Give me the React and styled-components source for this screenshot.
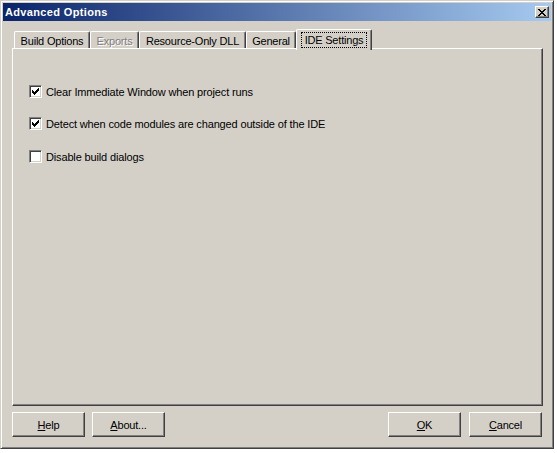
import React from "react";
import styled, { createGlobalStyle } from "styled-components";

const Global = createGlobalStyle`
  html, body { margin: 0; padding: 0; background: #ffffff; }
  body { font-family: "Liberation Sans", Arial, sans-serif; font-size: 11px; }
  * { box-sizing: border-box; }
`;

const Window = styled.div`
  width: 554px;
  height: 449px;
  background: #d4d0c8;
  border: 1px solid;
  border-color: #d4d0c8 #404040 #404040 #d4d0c8;
  box-shadow: inset 1px 1px #ffffff, inset -1px -1px #808080;
  padding: 2px;
  display: flex;
  flex-direction: column;
`;

const TitleBar = styled.div`
  height: 18px;
  flex: none;
  background: linear-gradient(to right, #0a246a, #a6caf0);
  display: flex;
  align-items: center;
  justify-content: space-between;
  padding: 0 2px 0 2px;
`;

const TitleText = styled.span`
  color: #ffffff;
  font-weight: bold;
  font-size: 11px;
  letter-spacing: 0.35px;
  line-height: 18px;
`;

const CloseButton = styled.div`
  width: 14px;
  height: 12px;
  background: #d4d0c8;
  border: 1px solid;
  border-color: #ffffff #404040 #404040 #ffffff;
  box-shadow: inset -1px -1px #808080;
  display: flex;
  align-items: center;
  justify-content: center;
`;

const Body = styled.div`
  flex: 1;
  display: flex;
  flex-direction: column;
  padding: 8px 8px 9px 9px;
`;

const TabStrip = styled.div`
  height: 19px;
  flex: none;
  display: flex;
  align-items: flex-end;
  padding-left: 2px;
  position: relative;
  z-index: 1;
`;

const Tab = styled.div`
  width: ${(p) => p.$w}px;
  height: ${(p) => (p.$active ? 21 : 17)}px;
  margin-bottom: ${(p) => (p.$active ? -2 : 0)}px;
  background: #d4d0c8;
  border-top: 1px solid #ffffff;
  border-left: 1px solid #ffffff;
  border-right: 1px solid #404040;
  border-top-left-radius: 2px;
  border-top-right-radius: 2px;
  box-shadow: inset -1px 0 #808080;
  display: flex;
  justify-content: center;
  align-items: flex-start;
  padding-top: ${(p) => (p.$active ? 2 : 3)}px;
  color: ${(p) => (p.$disabled ? "#808080" : "#000000")};
  text-shadow: ${(p) => (p.$disabled ? "1px 1px 0 #ffffff" : "none")};
  letter-spacing: -0.2px;
  line-height: 13px;
  white-space: nowrap;
`;

const FocusRect = styled.span`
  border: 1px dotted #000000;
  padding: 0 3px;
  line-height: 13px;
  height: 16px;
  display: flex;
  align-items: center;
`;

const Panel = styled.div`
  flex: 1;
  border: 1px solid;
  border-color: #ffffff #404040 #404040 #ffffff;
  box-shadow: inset -1px -1px #808080;
  display: flex;
  flex-direction: column;
  padding: 36px 0 0 16px;
`;

const OptionRow = styled.label`
  display: flex;
  align-items: center;
  height: 13px;
  gap: 4px;
  margin-bottom: ${(p) => p.$gap}px;
  letter-spacing: -0.15px;
  color: #000000;
  white-space: nowrap;
`;

const CheckBox = styled.span`
  width: 13px;
  height: 13px;
  flex: none;
  background: #ffffff;
  border: 1px solid;
  border-color: #808080 #ffffff #ffffff #808080;
  box-shadow: inset 1px 1px #404040, inset -1px -1px #d4d0c8;
  display: flex;
  align-items: center;
  justify-content: center;
`;

const ButtonRow = styled.div`
  flex: none;
  margin-top: 6px;
  display: flex;
  justify-content: space-between;
  padding-right: 1px;
`;

const ButtonGroup = styled.div`
  display: flex;
  gap: ${(p) => p.$gap}px;
`;

const Button = styled.div`
  width: 73px;
  height: 25px;
  background: #d4d0c8;
  border: 1px solid;
  border-color: #ffffff #404040 #404040 #ffffff;
  box-shadow: inset -1px -1px #808080;
  display: flex;
  align-items: center;
  justify-content: center;
  letter-spacing: -0.2px;
  color: #000000;
  u { text-decoration: underline; text-underline-offset: 1px; }
`;

const Pixels = ({ rows, w, h }) => (
  <svg width={w} height={h} viewBox={`0 0 ${w} ${h}`} shapeRendering="crispEdges">
    {rows.map((r, y) =>
      r.split("").map((c, x) =>
        c === "x" ? <rect key={`${x}-${y}`} x={x} y={y} width="1" height="1" fill="#000" /> : null
      )
    )}
  </svg>
);

const checkRows = [
  "......x",
  ".....xx",
  "x...xxx",
  "xx.xxx.",
  "xxxxx..",
  ".xxx...",
  "..x....",
];

const closeRows = [
  "xx....xx",
  ".xx..xx.",
  "..xxxx..",
  "...xx...",
  "..xxxx..",
  ".xx..xx.",
  "xx....xx",
];

const Option = ({ checked, children, gap }) => (
  <OptionRow $gap={gap}>
    <CheckBox>{checked && <Pixels rows={checkRows} w={7} h={7} />}</CheckBox>
    <span>{children}</span>
  </OptionRow>
);

export default function App() {
  return (
    <>
      <Global />
      <Window>
        <TitleBar>
          <TitleText>Advanced Options</TitleText>
          <CloseButton>
            <Pixels rows={closeRows} w={8} h={7} />
          </CloseButton>
        </TitleBar>
        <Body>
          <TabStrip>
            <Tab $w={76}>Build Options</Tab>
            <Tab $w={49} $disabled>Exports</Tab>
            <Tab $w={107}>Resource-Only DLL</Tab>
            <Tab $w={50}>General</Tab>
            <Tab $w={76} $active>
              <FocusRect>IDE Settings</FocusRect>
            </Tab>
          </TabStrip>
          <Panel>
            <Option checked gap={19}>Clear Immediate Window when project runs</Option>
            <Option checked gap={20}>Detect when code modules are changed outside of the IDE</Option>
            <Option gap={0}>Disable build dialogs</Option>
          </Panel>
          <ButtonRow>
            <ButtonGroup $gap={7}>
              <Button><span><u>H</u>elp</span></Button>
              <Button><span><u>A</u>bout...</span></Button>
            </ButtonGroup>
            <ButtonGroup $gap={8}>
              <Button><span><u>O</u>K</span></Button>
              <Button><span><u>C</u>ancel</span></Button>
            </ButtonGroup>
          </ButtonRow>
        </Body>
      </Window>
    </>
  );
}
